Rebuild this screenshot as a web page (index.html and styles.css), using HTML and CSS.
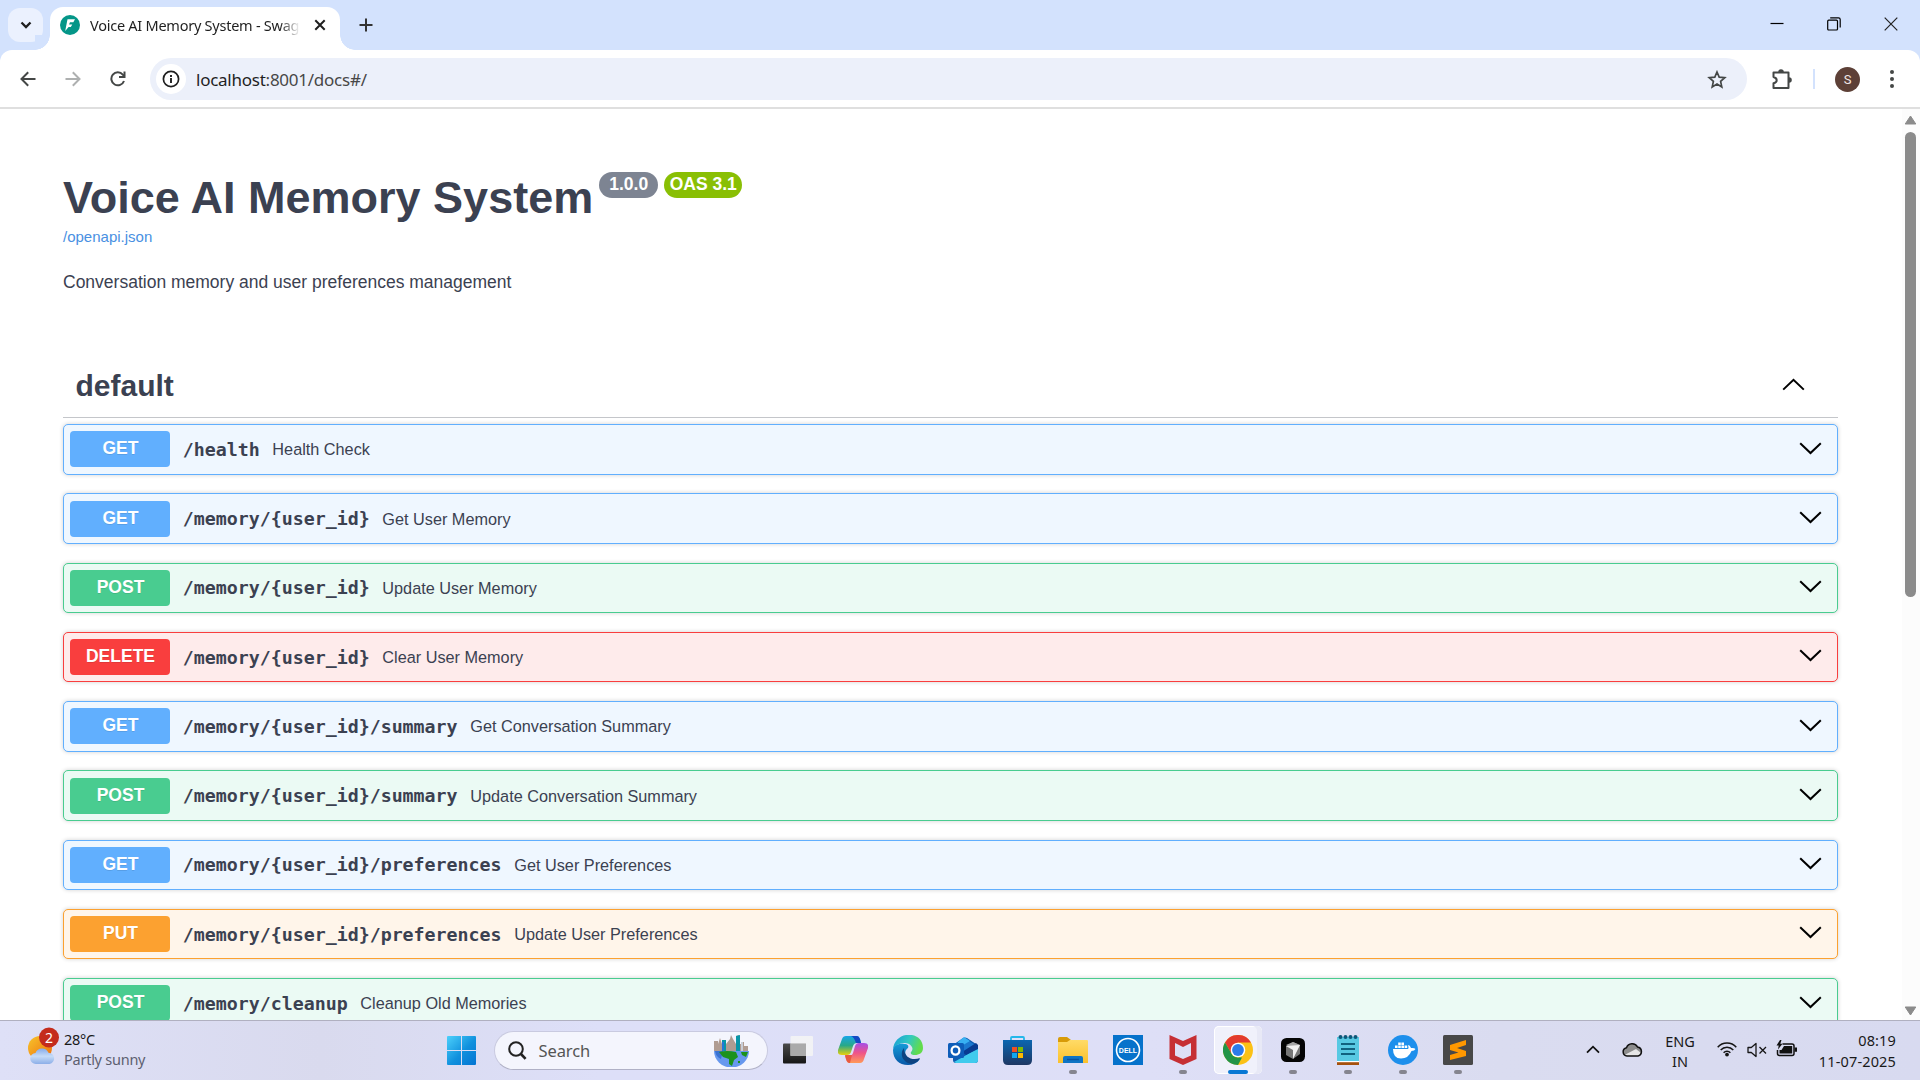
FILE: index.html
```html
<!DOCTYPE html>
<html lang="en">
<head>
<meta charset="utf-8">
<title>Voice AI Memory System - Swagger UI</title>
<link rel="stylesheet" href="styles.css">
</head>
<body>
<svg class="defs" width="0" height="0">
  <symbol id="down" viewBox="0 0 23 13"><path d="M1.2 1.2 11.5 11 21.8 1.2" fill="none" stroke="#000" stroke-width="2"/></symbol>
  <symbol id="up" viewBox="0 0 23 13"><path d="M1.2 11.6 11.5 1.8 21.8 11.6" fill="none" stroke="#000" stroke-width="2"/></symbol>
</svg>
<div class="screen">
  <header class="tabstrip">
    <button class="tab-search"><svg width="12" height="8" viewBox="0 0 12 8"><path d="M1.5 1.5 6 6l4.500-4.500" fill="none" stroke="#1f1f1f" stroke-width="2.300"/></svg></button>
    <div class="tab">
      <svg class="favicon" width="20" height="20" viewBox="0 0 20 20"><circle cx="10" cy="10" r="10" fill="#049688"/><path d="M7.500 4.200h7.500l-1.700 3H10L9 9.500h3.300L10.800 12H8.600L5.200 16z" fill="#fff"/></svg>
      <span class="tab-title">Voice AI Memory System - Swagger UI</span>
      <svg class="tab-close" width="12" height="12" viewBox="0 0 12 12"><path d="m1.300 1.300 9.400 9.400m0-9.400-9.400 9.400" stroke="#1f1f1f" stroke-width="2"/></svg>
    </div>
    <svg class="new-tab" width="14" height="14" viewBox="0 0 14 14"><path d="M7 .5v13M.5 7h13" stroke="#333" stroke-width="2"/></svg>
    <div class="window-controls">
      <svg width="14" height="14" viewBox="0 0 14 14"><path d="M.5 6.500h13" stroke="#000" stroke-width="1.200"/></svg>
      <svg width="14" height="14" viewBox="0 0 14 14"><rect x=".7" y="3.200" width="9.800" height="9.800" rx="1" fill="none" stroke="#000" stroke-width="1.200"/><path d="M3.200.8h8.300q1.700 0 1.700 1.700v8" fill="none" stroke="#000" stroke-width="1.200"/></svg>
      <svg width="14" height="14" viewBox="0 0 14 14"><path d="m.7.700 12.600 12.600m0-12.600L.7 13.300" stroke="#222" stroke-width="1.200"/></svg>
    </div>
  </header>
  <nav class="toolbar">
    <div class="nav-buttons">
      <svg width="16" height="16" viewBox="0 0 16 16"><path d="M15.500 8H1.600M8.200 1.300 1.500 8l6.700 6.700" fill="none" stroke="#444746" stroke-width="2"/></svg>
      <svg width="16" height="16" viewBox="0 0 16 16"><path d="M.5 8h13.900M7.800 1.300 14.500 8l-6.700 6.700" fill="none" stroke="#aeb0b0" stroke-width="2"/></svg>
      <svg width="16" height="16" viewBox="0 0 16 16"><path d="M14 10A6.500 6.500 0 1 1 12.800 3.600L14.500 5.500" fill="none" stroke="#444746" stroke-width="2"/><path d="M14.500.5v5.500H9" fill="none" stroke="#444746" stroke-width="2"/></svg>
    </div>
    <div class="omnibox">
      <span class="site-info"><svg width="18" height="18" viewBox="0 0 18 18"><circle cx="9" cy="9" r="7.600" fill="none" stroke="#1f1f1f" stroke-width="1.700"/><path d="M9 8v5M9 5v1.900" stroke="#1f1f1f" stroke-width="1.900"/></svg></span>
      <span class="url">localhost<i>:8001/docs#/</i></span>
      <svg class="star" width="20" height="19" viewBox="0 0 20 19"><path d="m10 2 2.200 5.200 5.600.5-4.200 3.700 1.200 5.500L10 14l-4.800 2.900 1.200-5.500-4.200-3.700 5.600-.5z" fill="none" stroke="#444746" stroke-width="1.700"/></svg>
    </div>
    <svg class="puzzle" width="22" height="22" viewBox="0 0 22 22"><path d="M2.500 4.500h15V20h-15v-4.800q3.200-.7 3.200-3T2.500 9z" fill="none" stroke="#444746" stroke-width="2" stroke-linejoin="round"/><path d="M7.200 4a2.800 2.800 0 0 1 5.600 0zM18 9.200a2.800 2.800 0 0 1 0 5.600z" fill="#444746"/></svg>
    <span class="divider"></span>
    <span class="avatar">S</span>
    <svg class="menu" width="4" height="18" viewBox="0 0 4 18"><g fill="#444746"><circle cx="2" cy="2" r="2"/><circle cx="2" cy="9" r="2"/><circle cx="2" cy="16" r="2"/></g></svg>
  </nav>

  <div class="viewport">
    <main class="page">
      <div class="heading">
        <h1>Voice AI Memory System</h1>
        <span class="badge">1.0.0</span>
        <span class="badge oas">OAS 3.1</span>
      </div>
      <a class="spec">/openapi.json</a>
      <p class="about">Conversation memory and user preferences management</p>
      <div class="section"><h2>default</h2><svg width="23" height="13"><use href="#up"/></svg></div>
      <div class="ops">
        <div class="op get"><b class="method">GET</b><span class="path">/health</span><span class="summary">Health Check</span><svg width="23" height="13"><use href="#down"/></svg></div>
        <div class="op get"><b class="method">GET</b><span class="path">/memory/{user_id}</span><span class="summary">Get User Memory</span><svg width="23" height="13"><use href="#down"/></svg></div>
        <div class="op post"><b class="method">POST</b><span class="path">/memory/{user_id}</span><span class="summary">Update User Memory</span><svg width="23" height="13"><use href="#down"/></svg></div>
        <div class="op delete"><b class="method">DELETE</b><span class="path">/memory/{user_id}</span><span class="summary">Clear User Memory</span><svg width="23" height="13"><use href="#down"/></svg></div>
        <div class="op get"><b class="method">GET</b><span class="path">/memory/{user_id}/summary</span><span class="summary">Get Conversation Summary</span><svg width="23" height="13"><use href="#down"/></svg></div>
        <div class="op post"><b class="method">POST</b><span class="path">/memory/{user_id}/summary</span><span class="summary">Update Conversation Summary</span><svg width="23" height="13"><use href="#down"/></svg></div>
        <div class="op get"><b class="method">GET</b><span class="path">/memory/{user_id}/preferences</span><span class="summary">Get User Preferences</span><svg width="23" height="13"><use href="#down"/></svg></div>
        <div class="op put"><b class="method">PUT</b><span class="path">/memory/{user_id}/preferences</span><span class="summary">Update User Preferences</span><svg width="23" height="13"><use href="#down"/></svg></div>
        <div class="op post"><b class="method">POST</b><span class="path">/memory/cleanup</span><span class="summary">Cleanup Old Memories</span><svg width="23" height="13"><use href="#down"/></svg></div>
      </div>
    </main>
    <div class="scrollbar">
      <svg width="13" height="10" viewBox="0 0 13 10"><path d="M6.500 1 11.800 9H1.200z" fill="#8b8b8b" stroke="#8b8b8b" stroke-linejoin="round"/></svg>
      <div class="thumb"></div>
      <svg class="arrow-down" width="13" height="10" viewBox="0 0 13 10"><path d="M6.500 9 1.200 1h10.600z" fill="#8b8b8b" stroke="#8b8b8b" stroke-linejoin="round"/></svg>
    </div>
  </div>

  <footer class="taskbar">
    <div class="weather">
      <svg width="32" height="38" viewBox="0 0 32 38"><defs><linearGradient id="sun" x1="0" y1="0" x2="1" y2="1"><stop offset="0" stop-color="#f6c52c"/><stop offset="1" stop-color="#ef6c0c"/></linearGradient><linearGradient id="cl" x1="0" y1="0" x2="0" y2="1"><stop offset="0" stop-color="#85aaea"/><stop offset=".5" stop-color="#c6dcf8"/><stop offset="1" stop-color="#8caee8"/></linearGradient></defs><circle cx="12" cy="21" r="12" fill="url(#sun)"/><path d="M8 37a5.500 5.500 0 0 1-.5-11 7 7 0 0 1 13-.3A5.700 5.700 0 0 1 21.500 37z" fill="url(#cl)"/><circle cx="21" cy="10.500" r="10" fill="#c42b1c"/><text x="21" y="16" text-anchor="middle" class="count">2</text></svg>
      <div class="weather-text"><span>28°C</span><span class="muted">Partly sunny</span></div>
    </div>
    <svg class="start" width="29" height="29" viewBox="0 0 29 29"><defs><linearGradient id="win" gradientUnits="userSpaceOnUse" x1="0" y1="0" x2="29" y2="29"><stop offset="0" stop-color="#4cd0fb"/><stop offset=".55" stop-color="#1090dd"/><stop offset="1" stop-color="#0474d2"/></linearGradient></defs><path d="M0 1q0-1 1-1h13v14H0zM15 0h13q1 0 1 1v13H15zM0 15h14v14H1q-1 0-1-1zM15 15h14v13q0 1-1 1H15z" fill="url(#win)"/></svg>
    <div class="search">
      <svg width="19" height="19" viewBox="0 0 19 19"><circle cx="8" cy="8" r="6.800" fill="none" stroke="#222" stroke-width="2"/><path d="m13 13 4.600 4.800" stroke="#222" stroke-width="2.600"/></svg>
      <span>Search</span>
      <svg class="globe" width="35" height="32" viewBox="0 0 35 32"><path d="M0 16V6h4v3l2-6 2 6v-4h4v4l4-5 1-4 2 4 3 5V1l3-1v9h2V7h3v4h4v5z" fill="#b09c92"/><path d="M8 5h4v11H8zM22 1l4-1v16h-4z" fill="#0a96a8"/><path d="M8 7h2v9H8z" fill="#2477d8"/><path d="M27 7h2v9h-2z" fill="#c9ced8"/><path d="M0 16h35a17 16 0 0 1-35 0" fill="#6798ee"/><path d="M1 16h8l-2 8q-5-2-6-8" fill="#3a72d2"/><path d="M5 17q8-2 17 0l2 5-4 3-2 6-3-2v-5l-6-2zM27 17h7l-2 5-4-2zM24 26h2v2h-2z" fill="#1c921b"/></svg>
    </div>
    <div class="apps">
      <div class="app"><svg viewBox="0 0 30 30"><defs><linearGradient id="tv" x1="0" y1="0" x2="0" y2="1"><stop offset="0" stop-color="#4a4a4a"/><stop offset="1" stop-color="#161616"/></linearGradient></defs><rect y="8.500" width="23" height="20" rx="1" fill="url(#tv)"/><rect x="7.500" y="1" width="22.500" height="20" rx="1" fill="#f4f4f4" opacity=".86"/><path d="M7.500 8.500H23V21H7.500z" fill="#aaa"/></svg></div>
      <div class="app"><svg viewBox="0 0 30 30"><defs><linearGradient id="c1" x1="0" y1="0" x2="0" y2="1"><stop offset="0" stop-color="#18a6e8"/><stop offset=".5" stop-color="#28a888"/><stop offset="1" stop-color="#e8d10b"/></linearGradient><linearGradient id="c2" x1="0" y1="0" x2="0" y2="1"><stop offset="0" stop-color="#a44fe8"/><stop offset=".5" stop-color="#ef5488"/><stop offset="1" stop-color="#ff9a58"/></linearGradient></defs><path d="M8 1h11q2 0 3 3l1 4h-4q-3 0-4 3l-2 6q-1 3-4 3H4q-5 0-4-5L4 4q1-3 4-3" fill="url(#c1)"/><path d="M13 1h6q2 0 3 3l1 4h-5q-2-6-5-7" fill="#1449c4"/><path d="M22 28H11q-2 0-3-4l-1-3h4q3 0 4-3l2-7q1-3 4-3h5q5 0 4 5l-4 11q-1 4-4 4" fill="url(#c2)"/><path d="M7 20h7l-2 8q-3 0-4-4z" fill="#e75a42"/></svg></div>
      <div class="app"><svg viewBox="0 0 30 30"><defs><linearGradient id="e1" x1="0" y1="0" x2="1" y2=".3"><stop offset="0" stop-color="#179bd8"/><stop offset=".55" stop-color="#31c8c2"/><stop offset="1" stop-color="#62dc4b"/></linearGradient><linearGradient id="e2" x1="0" y1="0" x2="0" y2="1"><stop offset="0" stop-color="#159bd7"/><stop offset="1" stop-color="#0857a8"/></linearGradient></defs><path d="M0 15C1-5 30-5 30 13c0 5-4 7-8 7-3 0-5-1-4-3 4-4-1-9-6-9-6 0-11 3-12 7" fill="url(#e1)"/><path d="M0 15c1-5 6-7 11-6 4 0 5 2 4 4-6 4-1 12 6 12 3 0 5-1 6-1-3 4-7 6-12 6C6 30 0 24 0 15" fill="url(#e2)"/><path d="M11 13c-5 6-1 15 8 16 4-1 7-3 8-6-7 3-16 0-16-10" fill="#0d4381"/></svg></div>
      <div class="app"><svg viewBox="0 0 30 30"><path d="m5 10 10-7q2-1 4 0l9 6q2 1 2 3v13q0 3-3 3H8q-3 0-3-3z" fill="#0d5cb0"/><path d="m7 9 9-6 13 8-10 7z" fill="#1b78cf"/><path d="m10 7 6-5 6 4-12 7z" fill="#38b0f2"/><path d="m30 13-15 9-9 5 2 1h19q3 0 3-3z" fill="#40cbed"/><path d="m14 17 14-9 2 2v4L18 20z" fill="#083c91"/><rect y="8" width="16" height="15" rx="1.500" fill="#0d5db9"/><ellipse cx="7.500" cy="15.500" rx="3.900" ry="4.200" fill="none" stroke="#fff" stroke-width="2.300"/></svg></div>
      <div class="app"><svg viewBox="0 0 30 30"><defs><linearGradient id="st" x1="0" y1="0" x2="0" y2="1"><stop offset="0" stop-color="#0b66b0"/><stop offset="1" stop-color="#1e3763"/></linearGradient></defs><path d="M8 7V3q0-1 1-1h11q1 0 1 1v4" fill="none" stroke="#24b7ea" stroke-width="1.800"/><path d="M0 5h29v20q0 5-5 5H5q-5 0-5-5z" fill="url(#st)"/><path d="M9 12h5v5H9z" fill="#f25022"/><path d="M15 12h5v5h-5z" fill="#7fba00"/><path d="M9 18h5v5H9z" fill="#10a7f0"/><path d="M15 18h5v5h-5z" fill="#ffb900"/></svg></div>
      <div class="app running"><svg viewBox="0 0 30 30"><defs><linearGradient id="fo" x1="0" y1="0" x2="0" y2="1"><stop offset="0" stop-color="#ffdb67"/><stop offset="1" stop-color="#fbc02b"/></linearGradient></defs><path d="M0 8V4q0-2 2-2h7l4 3v4z" fill="#d89b08"/><path d="M0 7h9l3-2h17q1 0 1 1v22H0z" fill="url(#fo)"/><path d="M5 28v-5q0-2 2-2h16q2 0 2 2v5z" fill="#0f74c4"/><path d="M9 24.500h12" stroke="#0753a0" stroke-width="1.400"/></svg></div>
      <div class="app"><svg viewBox="0 0 30 30"><path d="M0 0h30v30H0z" fill="#0672cb"/><circle cx="15" cy="15" r="11.500" fill="none" stroke="#fff" stroke-width="1.600"/><text x="15" y="17.600" text-anchor="middle" class="dell">DELL</text></svg></div>
      <div class="app running"><svg viewBox="0 0 30 30"><path d="m1.500 0 13.500 6L28.500 0v24L15 30 1.500 24zM7 8v12.500l8 3.500 8-3.500V8l-8 4z" fill="#c62f34" fill-rule="evenodd"/></svg></div>
      <div class="app active"><svg viewBox="0 0 30 30"><circle cx="15" cy="15" r="15" fill="#fbc116"/><path d="M2 7.500A15 15 0 0 1 28 7.500H15L8.500 18.700z" fill="#e33b2e"/><path d="M2 7.500 8.500 18.700q2 3.800 6.500 3.800h4L15 30A15 15 0 0 1 2 7.500" fill="#229447"/><circle cx="15" cy="15" r="7.300" fill="#fff"/><circle cx="15" cy="15" r="5.900" fill="#2c7bea"/></svg></div>
      <div class="app running"><svg viewBox="0 0 30 30"><rect x="3" y="3" width="24" height="24" rx="5.500" fill="#050505"/><path d="m15 7 7 3v9l-7 5-7-4v-9z" fill="#777"/><path d="m8 10 7-3 7 3-7 3z" fill="#a5a5a5"/><path d="m8 11 14-1-7 14v-9z" fill="#f1f1f1"/></svg></div>
      <div class="app running"><svg viewBox="0 0 30 30"><path d="M4 2h22v26H4z" fill="#58c9e3"/><path d="M4 26.500h22V30H4z" fill="#a5510d"/><path d="M4 26h22v1.200H4z" fill="#fff"/><g fill="#0d5879"><circle cx="7.500" cy="2" r="2"/><circle cx="12.500" cy="2" r="2"/><circle cx="17.500" cy="2" r="2"/><circle cx="22.500" cy="2" r="2"/></g><path d="M8 9h14M8 14h14M8 19h14" stroke="#11617f" stroke-width="2"/></svg></div>
      <div class="app running"><svg viewBox="0 0 30 30"><circle cx="15" cy="15" r="15" fill="#1d8fec"/><path d="M5 14h15q1-1 0-4 2 0 3 3 3-.5 4.500 1-1 2-4 2-3 7.500-10.500 7.500Q5 23.500 5 14M7 10.500h2.600V13H7zM10.200 10.500h2.600V13h-2.600zM13.400 10.500H16V13h-2.600zM16.600 10.500h2.600V13h-2.600zM10.200 7.500h2.600V10h-2.600zM13.400 7.500H16V10h-2.600z" fill="#fff"/></svg></div>
      <div class="app running"><svg viewBox="0 0 30 30"><rect width="30" height="30" rx="1.500" fill="#484848"/><path d="M23 5v5l-9 3 9 3v5L7 25v-5l8.500-2.500L7 15v-5z" fill="#ff9800"/></svg></div>
    </div>
    <div class="tray">
      <svg class="t-up" width="14" height="9" viewBox="0 0 14 9"><path d="m1 7.700 6-6 6 6" fill="none" stroke="#111" stroke-width="1.800"/></svg>
      <svg class="t-cloud" width="21" height="15" viewBox="0 0 21 15"><path d="M5 14a4.200 4.200 0 0 1-.5-8.300A6 6 0 0 1 15.500 5 4.600 4.600 0 0 1 16 14z" fill="#8d8d8d"/><path d="M2.500 13 14 7l5 4-2 3H5z" fill="#e6e6e6"/><path d="M5 14a4.200 4.200 0 0 1-.5-8.300A6 6 0 0 1 15.500 5 4.600 4.600 0 0 1 16 14z" fill="none" stroke="#111" stroke-width="1.500"/></svg>
      <div class="lang"><span>ENG</span><span>IN</span></div>
      <svg class="t-wifi" width="20" height="16" viewBox="0 0 20 16"><g fill="none" stroke="#161616" stroke-width="1.500"><path d="M.7 6.200a12.500 12.500 0 0 1 18.600 0M3.700 9a8.500 8.500 0 0 1 12.600 0M6.600 11.800a4.700 4.700 0 0 1 6.800 0"/></g><circle cx="10" cy="13.600" r="1.900" fill="#161616"/></svg>
      <svg class="t-vol" width="20" height="16" viewBox="0 0 20 16"><path d="M1 5.500h3.300L9 1.500v13l-4.700-4H1z" fill="none" stroke="#161616" stroke-width="1.300" stroke-linejoin="round"/><path d="m12.500 5 6.500 6.500m0-6.500-6.500 6.500" stroke="#161616" stroke-width="1.300"/></svg>
      <svg class="t-bat" width="21" height="17" viewBox="0 0 21 17"><path d="M6.500 4H16q2 0 2 2v7.500q0 2-2 2H3.500q-2 0-2-2V10" fill="none" stroke="#111" stroke-width="1.500"/><path d="M8 6h8.200v7.600H3.500V10h2zM18.500 7.500H21v4.300h-2.500zM4 0 .5 5.500h2.200L2 9.500l4.500-5.800H4.300L5.500 0z" fill="#111"/></svg>
      <div class="clock"><span>08:19</span><span>11-07-2025</span></div>
    </div>
  </footer>
</div>
</body>
</html>
```
FILE: styles.css
```css
* { box-sizing: border-box; }
body { margin: 0; overflow: hidden; background: #fff; font-family: "Liberation Sans", Arial, sans-serif; color: #3b4151; }
svg { display: block; flex: none; }
.defs { position: absolute; }
.screen { display: grid; grid-template-rows: 50px 59px 911px 60px; width: 1920px; height: 1080px; background: #d3e2fd; }

/* tab strip */
.tabstrip { display: flex; align-items: flex-start; background: #d3e2fd; font-family: "Noto Sans", "Open Sans", sans-serif; }
.tab-search { display: flex; align-items: center; justify-content: center; width: 35px; height: 34px; margin: 8px 7px 0 8px; padding: 0; border: 0; border-radius: 12px; background: #ebf1fe; }
.tab { position: relative; display: flex; align-items: center; width: 290px; height: 43px; margin-top: 7px; padding: 0 14px 7px 10px; border-radius: 13px 13px 0 0; background: #fff; }
.tab::before, .tab::after { content: ""; position: absolute; bottom: 0; width: 15px; height: 15px; }
.tab::before { left: -15px; background: radial-gradient(circle at 0 0, #d3e2fd 14.500px, #fff 15px); }
.tab::after { right: -15px; background: radial-gradient(circle at 100% 0, #d3e2fd 14.500px, #fff 15px); }
.tab-title { width: 210px; margin: 0 14px 0 10px; overflow: hidden; white-space: nowrap; color: #1f1f1f; font-size: 14.500px; line-height: 24px; letter-spacing: -.25px; -webkit-mask-image: linear-gradient(90deg, #000 190px, transparent 210px); mask-image: linear-gradient(90deg, #000 190px, transparent 210px); }
.new-tab { margin: 18px 0 0 19px; }
.window-controls { display: flex; gap: 43px; margin: 17px 22px 0 auto; }

/* toolbar */
.toolbar { display: flex; align-items: center; padding-top: 1px; border-bottom: 2px solid #dfdfdf; border-radius: 12px 12px 0 0; background: #fff; font-family: "Noto Sans", "Open Sans", sans-serif; }
.nav-buttons { display: flex; gap: 29px; width: 150px; padding-left: 20px; }
.omnibox { display: flex; align-items: center; width: 1597px; height: 42px; padding: 0 20px 0 6px; border-radius: 21px; background: #ecf0fa; }
.site-info { display: grid; place-items: center; width: 30px; height: 30px; border-radius: 50%; background: #fff; }
.url { margin: 1px 0 0 10px; color: #1f1f1f; font-size: 17px; line-height: 24px; letter-spacing: -.25px; }
.url i { color: #474747; font-style: normal; }
.star { margin-left: auto; }
.puzzle { margin-left: 24px; }
.divider { width: 2px; height: 20px; margin-left: 20px; background: #d3e2fd; }
.avatar { display: grid; place-items: center; width: 25px; height: 25px; margin-left: 20px; border-radius: 50%; background: #5d4037; color: #f1e7e4; font: 13px/25px Roboto, sans-serif; }
.menu { margin-left: 30px; }

/* page */
.viewport { display: grid; grid-template-columns: 1902px 18px; overflow: hidden; background: #fff; }
.page { width: 1775px; margin-left: 63px; padding-top: 62px; }
.heading { display: flex; align-items: flex-start; height: 52px; }
h1 { margin: 1px 0 0; font-size: 45px; line-height: 52px; font-weight: 700; white-space: nowrap; }
.badge { height: 26px; margin: 1px 0 0 6px; padding: 0 10px; border-radius: 13px; background: #7d8492; color: #fff; font-size: 17.500px; line-height: 24px; font-weight: 700; white-space: nowrap; }
.oas { margin-left: 6px; padding: 0 5.500px; background: #89bf04; }
.spec { display: block; margin-top: 5px; color: #4990e2; font-size: 15px; line-height: 18px; }
.about { margin: 24px 0 0; font-size: 17.500px; line-height: 24px; }
.section { display: flex; align-items: center; height: 64px; margin: 60px 0 6px; padding: 0 33px 0 12.500px; border-bottom: 1px solid rgba(59,65,81,.3); }
h2 { margin: 0; font-size: 30px; line-height: 35px; }
.section svg { margin-left: auto; margin-top: -3px; }
.ops { display: grid; gap: 18.750px; }
.op { display: flex; align-items: center; height: 50.500px; padding: 0 15px 0 6px; border: 1px solid; border-radius: 5px; box-shadow: 0 0 4px rgba(0,0,0,.19); }
.method { width: 100px; height: 36px; margin-top: .4px; padding-left: 1px; border-radius: 4px; color: #fff; font-size: 17.500px; line-height: 35px; text-align: center; text-shadow: 0 1px 0 rgba(0,0,0,.1); }
.path { margin: 1px 0 0 12.700px; font: 700 18.270px/24px "DejaVu Sans Mono", monospace; white-space: nowrap; }
.summary { margin-left: 12.700px; font-size: 16.250px; line-height: 22px; white-space: nowrap; }
.op svg { margin: -2.500px 0 0 auto; }
.get { border-color: #61affe; background: #eff7ff; }
.get .method { background: #61affe; }
.post { border-color: #49cc90; background: #ebfaf4; }
.post .method { background: #49cc90; }
.delete { border-color: #f93e3e; background: #feebeb; }
.delete .method { background: #f93e3e; }
.put { border-color: #fca130; background: #fff5ea; }
.put .method { background: #fca130; }
.scrollbar { display: flex; flex-direction: column; align-items: center; height: 911px; padding: 6px 1px 4px 0; background: #fcfcfc; }
.thumb { width: 11px; height: 465px; margin-top: 7px; border-radius: 6px; background: #8b8b8b; }
.arrow-down { margin-top: auto; }

/* taskbar */
.taskbar { display: flex; align-items: flex-start; border-top: 1px solid #b0b0c0; background: linear-gradient(90deg, #dee0f7 0, #d9daee 320px, #dddff8 600px, #dedff7 1150px, #dadcf0 1500px, #d8daf0); color: #191919; font-family: "Noto Sans", "Open Sans", sans-serif; font-size: 14.500px; line-height: 20px; }
.weather { display: flex; width: 447px; padding: 6px 0 0 28px; }
.weather-text { display: grid; margin: 2px 0 0 4px; letter-spacing: -.25px; }
.muted { color: #5d5f70; }
.count { fill: #fff; font-size: 14px; }
.dell { fill: #fff; font: 700 7px "Liberation Sans", sans-serif; }
.start { margin-top: 15px; }
.search { display: flex; align-items: center; width: 274px; height: 39px; margin: 10px 0 0 17.500px; padding: 0 18px 0 13px; border: 1px solid #c9cae0; border-bottom-color: #b0b1c6; border-radius: 20px; background: #f4f5fd; color: #555; font-size: 16.500px; }
.search span { margin-left: 12px; letter-spacing: -.1px; }
.globe { margin-left: auto; }
.apps { display: flex; gap: 7px; margin: 5px 0 0 6px; }
.app { position: relative; width: 48px; height: 48px; padding: 9px; border-radius: 5px; }
.app svg { width: 30px; height: 30px; }
.running::after, .active::after { content: ""; position: absolute; bottom: 0; left: 20px; width: 8px; height: 4px; border-radius: 2px; background: #85858f; }
.active { background: #f0f1fb; box-shadow: inset -5px 0 #e8e9f6, inset 0 0 0 1px #fff; }
.active::after { left: 14px; width: 20px; background: #0878d4; }
.tray { display: flex; margin-left: auto; padding-right: 24px; }
.t-up { margin-top: 24px; }
.t-cloud { margin: 21px 0 0 22px; }
.lang, .clock { display: grid; margin-top: 10px; white-space: nowrap; }
.lang { width: 40px; margin-left: 17px; text-align: center; }
.t-wifi { margin: 20px 0 0 17px; }
.t-vol { margin: 21px 0 0 10px; }
.t-bat { margin: 19px 0 0 9px; }
.clock { width: 85px; margin: 9px 0 0 14px; text-align: right; letter-spacing: .15px; justify-items: end; }
```
